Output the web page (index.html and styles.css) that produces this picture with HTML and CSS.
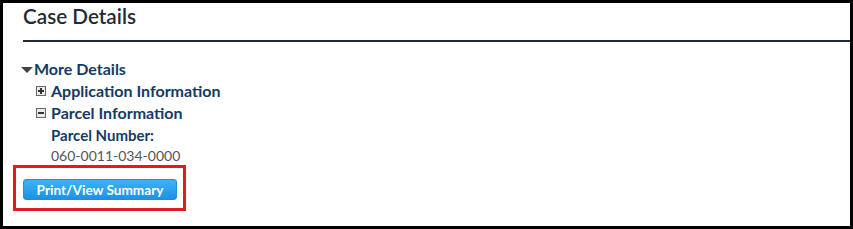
FILE: index.html
```html
<!DOCTYPE html>
<html>
<head>
<meta charset="utf-8">
<link rel="stylesheet" href="styles.css">
</head>
<body>
<div class="frame">
  <h1 class="title">Case Details</h1>
  <div class="details">
    <div class="more"><span class="tri"></span>More Details</div>
    <div class="row"><span class="box plus"></span>Application Information</div>
    <div class="row"><span class="box minus"></span>Parcel Information</div>
    <div class="parcel">
      <div class="label">Parcel Number:</div>
      <div class="value">060-0011-034-0000</div>
    </div>
    <div class="btnwrap">
      <button class="btn">Print/View Summary</button>
      <span class="highlight"></span>
    </div>
  </div>
</div>
</body>
</html>
```
FILE: styles.css
```css
html, body { margin: 0; padding: 0; background: #000; }
body { width: 853px; height: 229px; font-family: Lato, "Open Sans", sans-serif; }
.frame {
  box-sizing: border-box;
  width: 853px; height: 229px;
  background: #fff;
  border-top: 3px solid #000;
  border-left: 3px solid #000;
  border-right: 3px solid #000;
  border-bottom: 3px solid #000;
  padding-left: 20px;
}
.title {
  margin: 1px 0 0 0;
  font-size: 20.7px;
  line-height: 24px;
  font-weight: 600;
  color: #1f2b37;
  padding-bottom: 12px;
  border-bottom: 2px solid #1f2b37;
}
.details { padding-top: 17px; }
.more {
  display: flex; align-items: center;
  margin-left: -2px;
  font-size: 16px; font-weight: 700; color: #143b63;
  line-height: 20px;
}
.tri {
  width: 0; height: 0;
  border-left: 6px solid transparent;
  border-right: 6px solid transparent;
  border-top: 6px solid #444;
  margin-right: 1px;
  margin-top: 1px;
}
.row {
  display: flex; align-items: center;
  margin-left: 13px;
  margin-top: 2px;
  font-size: 16px; font-weight: 700; color: #143b63;
  line-height: 20px;
}
.box {
  position: relative;
  box-sizing: border-box;
  width: 10px; height: 10px;
  border: 1px solid #666;
  background: #ececec;
  margin-right: 5px;
}
.box::before {
  content: ""; position: absolute;
  left: 1px; top: 3px; width: 6px; height: 2px; background: #333;
}
.plus::after {
  content: ""; position: absolute;
  left: 3px; top: 1px; width: 2px; height: 6px; background: #333;
}
.parcel { margin-left: 28px; margin-top: 3px; }
.label { font-size: 15px; font-weight: 700; color: #143b63; line-height: 19px; }
.value { font-size: 14px; color: #555; line-height: 19px; margin-top: 1px; }
.btnwrap { position: relative; margin-top: 14px; height: 21px; }
.btn {
  display: block;
  width: 154px; height: 21px;
  padding: 0;
  border: 1px solid #1f8ee0;
  border-radius: 3px;
  background: linear-gradient(#3cb2f6, #1d92e6);
  color: #fff;
  font-family: Lato, "Open Sans", sans-serif;
  font-size: 13.6px; font-weight: 700;
}
.highlight {
  position: absolute;
  left: -10px; top: -14px;
  width: 173px; height: 46px;
  box-sizing: border-box;
  border: 3px solid #e11b22;
}
```
